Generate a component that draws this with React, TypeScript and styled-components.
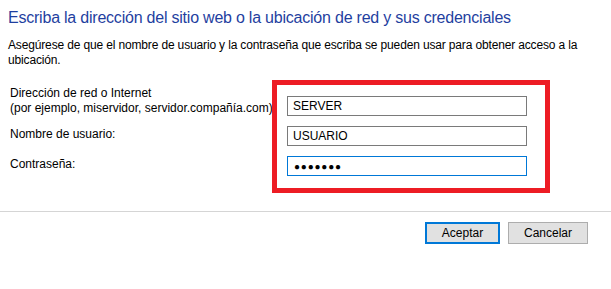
import styled, { createGlobalStyle } from "styled-components";

const GlobalStyle = createGlobalStyle`
  html, body {
    margin: 0;
    padding: 0;
    background: #ffffff;
  }
  body {
    font-family: "Liberation Sans", Arial, sans-serif;
    font-size: 12px;
    color: #000000;
  }
`;

const fields = [
  { label: ["Dirección de red o Internet", "(por ejemplo, miservidor, servidor.compañía.com)"], value: "SERVER" },
  { label: ["Nombre de usuario:"], value: "USUARIO" },
  { label: ["Contraseña:"], value: "●●●●●●●", secret: true },
];

export default function App() {
  return (
    <>
      <GlobalStyle />
      <Dialog>
        <Content>
          <Title>Escriba la dirección del sitio web o la ubicación de red y sus credenciales</Title>
          <Description>
            Asegúrese de que el nombre de usuario y la contraseña que escriba se pueden usar para obtener acceso a la
            <br />
            ubicación.
          </Description>

          <Fields>
            <LabelList>
              {fields.map((f) => (
                <Label key={f.label[0]} $lines={f.label.length}>
                  {f.label.map((line) => (
                    <span key={line}>{line}</span>
                  ))}
                </Label>
              ))}
            </LabelList>

            <Highlight>
              {fields.map((f) => (
                <Input key={f.value} $focused={!!f.secret} $secret={!!f.secret} readOnly value={f.value} />
              ))}
            </Highlight>
          </Fields>
        </Content>

        <Separator />

        <ButtonBar>
          <Button $primary $width={75}>Aceptar</Button>
          <Button $width={80}>Cancelar</Button>
        </ButtonBar>
      </Dialog>
    </>
  );
}

const Dialog = styled.div`
  width: 611px;
  height: 289px;
  background: #ffffff;
  display: flex;
  flex-direction: column;
  overflow: hidden;
`;
const Content = styled.div`
  padding: 7px 8px 0 8px;
  display: flex;
  flex-direction: column;
`;
const Title = styled.h1`
  margin: 0;
  font-size: 16px;
  line-height: 21px;
  font-weight: normal;
  letter-spacing: -0.22px;
  color: #1f3f9f;
  white-space: nowrap;
`;
const Description = styled.p`
  margin: 10px 0 0 0;
  font-size: 12px;
  line-height: 15px;
  letter-spacing: -0.15px;
  white-space: nowrap;
`;
const Fields = styled.div`
  display: flex;
  align-items: flex-start;
  margin-top: 12px;
`;
const LabelList = styled.div`
  width: 264px;
  padding: 6px 0 0 2px;
  box-sizing: border-box;
  display: flex;
  flex-direction: column;
  gap: 10px;
`;
const Label = styled.div<{ $lines: number }>`
  height: ${(p) => (p.$lines > 1 ? 30 : 20)}px;
  display: flex;
  flex-direction: column;
  line-height: 15px;
  white-space: nowrap;
  padding-top: ${(p) => (p.$lines > 1 ? 0 : 1)}px;
  box-sizing: border-box;
`;
const Highlight = styled.div`
  position: relative;
  z-index: 1;
  width: 278px;
  height: 113px;
  box-sizing: border-box;
  border: 5px solid #ed1c24;
  background: #ffffff;
  padding: 11px 18px 0 10px;
  display: flex;
  flex-direction: column;
  gap: 10px;
`;
const Input = styled.input<{ $focused: boolean; $secret: boolean }>`
  width: 240px;
  height: 20px;
  box-sizing: border-box;
  margin: 0;
  border: 1px solid ${(p) => (p.$focused ? "#0078d7" : "#7a7a7a")};
  outline: none;
  padding: 0 0 0 ${(p) => (p.$secret ? 6 : 5)}px;
  background: #ffffff;
  color: #000000;
  font-family: "Liberation Sans", Arial, sans-serif;
  font-size: ${(p) => (p.$secret ? "10px" : "12px")};
  letter-spacing: ${(p) => (p.$secret ? "0.8px" : "0")};
`;
const Separator = styled.div`
  margin-top: 18px;
  height: 1px;
  background: #d5d5d5;
`;
const ButtonBar = styled.div`
  display: flex;
  justify-content: flex-end;
  gap: 8px;
  padding: 10px 23px 0 0;
`;
const Button = styled.button<{ $primary?: boolean; $width: number }>`
  width: ${(p) => p.$width}px;
  height: 22px;
  box-sizing: border-box;
  margin: 0;
  padding: 0;
  background: #e1e1e1;
  border: ${(p) => (p.$primary ? "2px solid #0078d7" : "1px solid #adadad")};
  color: #000000;
  font-family: "Liberation Sans", Arial, sans-serif;
  font-size: 12px;
`;
